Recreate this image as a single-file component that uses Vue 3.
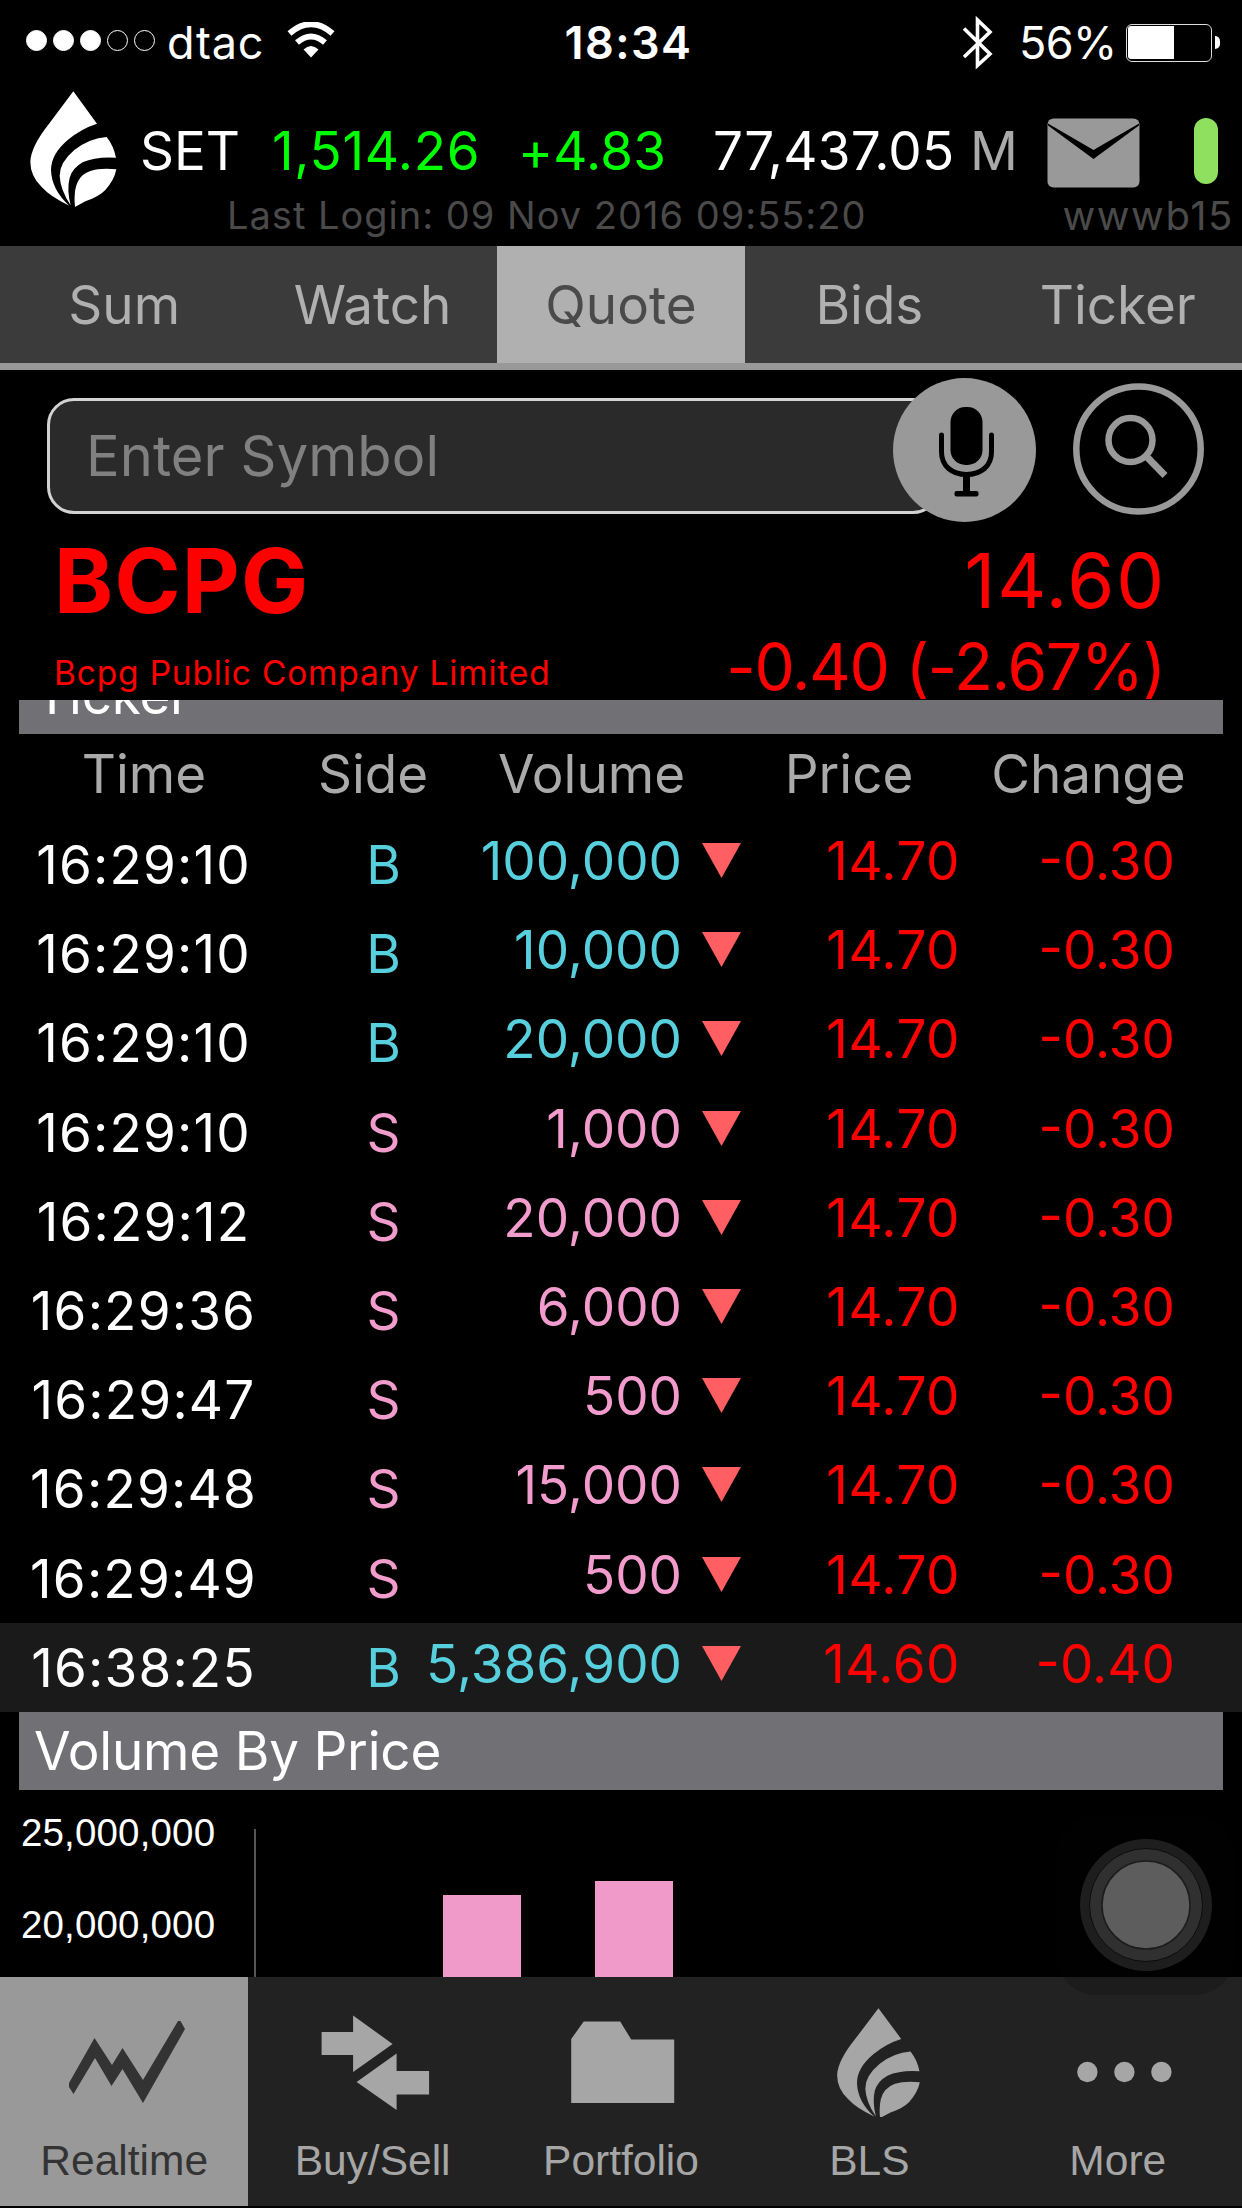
<script setup>
const signal = [true, true, true, false, false]
const tabs = ['Sum', 'Watch', 'Quote', 'Bids', 'Ticker']
const activeTab = 'Quote'

const trades = [
  { time: '16:29:10', side: 'B', volume: '100,000', price: '14.70', change: '-0.30' },
  { time: '16:29:10', side: 'B', volume: '10,000', price: '14.70', change: '-0.30' },
  { time: '16:29:10', side: 'B', volume: '20,000', price: '14.70', change: '-0.30' },
  { time: '16:29:10', side: 'S', volume: '1,000', price: '14.70', change: '-0.30' },
  { time: '16:29:12', side: 'S', volume: '20,000', price: '14.70', change: '-0.30' },
  { time: '16:29:36', side: 'S', volume: '6,000', price: '14.70', change: '-0.30' },
  { time: '16:29:47', side: 'S', volume: '500', price: '14.70', change: '-0.30' },
  { time: '16:29:48', side: 'S', volume: '15,000', price: '14.70', change: '-0.30' },
  { time: '16:29:49', side: 'S', volume: '500', price: '14.70', change: '-0.30' },
  { time: '16:38:25', side: 'B', volume: '5,386,900', price: '14.60', change: '-0.40' },
]

const axisLabels = ['25,000,000', '20,000,000']
const bars = [81.5, 95.5]

const flame = [
  'M222 34L293 131Q246 146 206 179Q155 222 155 270Q157 330 210 377Q153 350 127 321Q93 288 93 245Q95 200 148 133Z',
  'M322 171Q270 175 225 210Q180 248 181 288Q183 330 214 376Q202 328 211 293Q220 264 250 247Q290 229 350 233Q343 198 322 171Z',
  'M227 381Q221 320 243 293Q270 260 351 268Q345 300 318 330Q299 350 258 364Z',
]

const navItems = [
  { label: 'Realtime', icon: 'chart', active: true },
  { label: 'Buy/Sell', icon: 'swap' },
  { label: 'Portfolio', icon: 'folder' },
  { label: 'BLS', icon: 'flame' },
  { label: 'More', icon: 'more' },
]
</script>

<template>
  <div class="screen">
    <div class="status">
      <div class="status-left">
        <div class="signal">
          <i v-for="(on, i) in signal" :key="i" :class="{ on }"></i>
        </div>
        <span class="carrier">dtac</span>
        <svg class="wifi" width="48" height="36" viewBox="0 0 48 36">
          <path d="M2.500 11.500Q24-7 45.500 11.500" fill="none" stroke="#fff" stroke-width="6" />
          <path d="M10 20.500Q24 8.500 38 20.500" fill="none" stroke="#fff" stroke-width="6" />
          <path d="M16.500 27.500Q24 20.500 31.500 27.500L24 35.500Z" fill="#fff" />
        </svg>
      </div>
      <span class="clock">18:34</span>
      <div class="status-right">
        <svg width="30" height="54" viewBox="0 0 30 54">
          <path d="M1 12.500L27 38L14.500 49.500V4L27 16L1 41" fill="none" stroke="#fff" stroke-width="3.600" />
        </svg>
        <span class="percent">56%</span>
        <div class="battery"><div class="charge"></div></div>
        <i class="battery-tip"></i>
      </div>
    </div>

    <header class="header">
      <svg class="logo" width="87" height="117" viewBox="92 33 261 351">
        <path v-for="d in flame" :key="d" :d="d" fill="#fff" />
      </svg>
      <div class="market">
        <div class="market-row">
          <span class="set">SET</span>
          <span class="index up">1,514.26</span>
          <span class="diff up">+4.83</span>
          <span class="value">77,437.05</span>
          <span class="unit">M</span>
          <svg class="mail" width="93" height="70" viewBox="0 0 93 70">
            <rect x="0.500" y="0.500" width="92" height="69" rx="6" fill="#999" />
            <path d="M1 5.500L46.500 32L92 5.500V7.500L46.500 41L1 7.500Z" fill="#000" />
          </svg>
          <i class="online"></i>
        </div>
        <div class="login-row">
          <span class="login">Last Login: 09 Nov 2016 09:55:20</span>
          <span class="server">wwwb15</span>
        </div>
      </div>
    </header>

    <nav class="tabs">
      <div v-for="t in tabs" :key="t" class="tab" :class="{ active: t === activeTab }">{{ t }}</div>
    </nav>

    <div class="search">
      <div class="field">
        <span>Enter Symbol</span>
        <svg class="mic" width="143" height="144" viewBox="0 0 143 144">
          <ellipse cx="71.500" cy="72" rx="71.500" ry="72" fill="#999" />
          <rect x="57.500" y="29" width="32" height="58" rx="15" />
          <path d="M48.500 57V74C48.500 88 59 96.500 73.500 96.500S98.500 88 98.500 74V57" fill="none" stroke="#000" stroke-width="5" stroke-linecap="round" />
          <path d="M73.500 97V115" stroke="#000" stroke-width="7" />
          <rect x="61.500" y="113" width="24" height="5.500" rx="2" />
        </svg>
      </div>
      <svg class="find" width="131" height="132" viewBox="0 0 131 132" fill="none" stroke="#999">
        <ellipse cx="65.500" cy="66" rx="62.200" ry="62.500" stroke-width="6.500" />
        <circle cx="57.500" cy="57" r="22" stroke-width="6.500" />
        <path d="M73 73L92 92.500" stroke-width="7" />
      </svg>
    </div>

    <section class="quote">
      <div>
        <div class="symbol">BCPG</div>
        <div class="company">Bcpg Public Company Limited</div>
      </div>
      <div class="quote-right">
        <div class="last">14.60</div>
        <div class="delta">-0.40 (-2.67%)</div>
      </div>
    </section>

    <main class="content">
      <h2 class="bar-title clipped">Ticker</h2>
      <div class="columns">
        <span>Time</span><span>Side</span><span>Volume</span><span>Price</span><span>Change</span>
      </div>
      <div v-for="(t, i) in trades" :key="i" class="trade" :class="[t.side === 'B' ? 'buy' : 'sell', { latest: i === trades.length - 1 }]">
        <span class="time">{{ t.time }}</span>
        <span class="side">{{ t.side }}</span>
        <span class="volume">{{ t.volume }}</span>
        <svg class="arrow" width="39" height="35" viewBox="0 0 39 35"><path d="M0 0H39L19.500 35Z" fill="#ff5e62" /></svg>
        <span class="num">{{ t.price }}</span>
        <span class="num">{{ t.change }}</span>
      </div>
      <h2 class="bar-title">Volume By Price</h2>
      <div class="chart">
        <div class="axis-labels">
          <div v-for="a in axisLabels" :key="a">{{ a }}</div>
        </div>
        <div class="plot">
          <div v-for="(h, i) in bars" :key="i" class="bar" :style="{ height: h + 'px' }"></div>
        </div>
      </div>
    </main>

    <footer class="nav">
      <div v-for="n in navItems" :key="n.label" class="nav-item" :class="{ active: n.active }">
        <svg v-if="n.icon === 'chart'" width="248" height="140" viewBox="0 1977 248 140">
          <path d="M69 2083L94.500 2038L112 2065L122.500 2048L143 2080L178 2021H180.500L185 2029L143 2103L122.500 2069L111.500 2086L95 2058L73.500 2094L69 2087Z" fill="#333" />
        </svg>
        <svg v-else-if="n.icon === 'swap'" width="248" height="140" viewBox="248.400 1977 248 140">
          <path d="M321 2032H352.500V2015.500L392 2044L352.500 2072V2055H321ZM428.500 2071H396V2053.500L356 2082L396 2110V2094.500H428.500Z" fill="#a6a6a6" />
        </svg>
        <svg v-else-if="n.icon === 'folder'" width="248" height="140" viewBox="496.800 1977 248 140">
          <path d="M571 2039L583.500 2021.500H620L631 2039.500H674V2103H571Z" fill="#a6a6a6" />
        </svg>
        <svg v-else-if="n.icon === 'flame'" width="248" height="140" viewBox="745.200 1977 248 140">
          <g transform="translate(807.500 1997.500) scale(.3205 .3165)">
            <path v-for="d in flame" :key="d" :d="d" fill="#a6a6a6" />
          </g>
        </svg>
        <svg v-else width="248" height="140" viewBox="993.600 1977 248 140" fill="#a6a6a6">
          <circle cx="1087" cy="2072" r="10.200" /><circle cx="1124" cy="2072" r="10.200" /><circle cx="1161" cy="2072" r="10.200" />
        </svg>
        <span>{{ n.label }}</span>
      </div>
    </footer>

    <div class="assist">
      <svg width="132" height="132" viewBox="0 0 132 132">
        <circle cx="66" cy="66" r="66" fill="#1e1e1e" />
        <circle cx="66" cy="66" r="56.500" fill="#303030" stroke="#0c0c0c" />
        <circle cx="66" cy="66" r="44" fill="#5d5d5d" stroke="#1c1c1c" stroke-width="1.500" />
      </svg>
    </div>
  </div>
</template>

<style>
body {
  margin: 0;
  background: #000;
}
</style>

<style scoped>
.screen {
  position: relative;
  display: flex;
  flex-direction: column;
  width: 1242px;
  height: 2208px;
  overflow: hidden;
  background: #000;
  color: #fff;
  font-family: Inter, "Liberation Sans", sans-serif;
  font-size: 53px;
  white-space: nowrap;
}
svg {
  display: block;
  flex: none;
}
.status {
  display: grid;
  grid-template-columns: 1fr auto 1fr;
  height: 85px;
  font-size: 45px;
  line-height: 85px;
}
.status-left,
.status-right {
  display: flex;
  align-items: center;
}
.signal {
  display: flex;
  gap: 6px;
  margin: -4px 0 0 26px;
}
.signal i {
  box-sizing: border-box;
  width: 21px;
  height: 21px;
  border: 1.5px solid #fff;
  border-radius: 50%;
}
.signal i.on {
  background: #fff;
}
.carrier {
  width: 105px;
  margin-left: 12px;
  letter-spacing: 0.8px;
}
.wifi {
  margin: -6px 0 0 15px;
}
.clock {
  margin-left: 15px;
  font-weight: 600;
  letter-spacing: 1.4px;
}
.status-right {
  justify-content: flex-end;
  padding-right: 22px;
}
.percent {
  width: 92px;
  margin: 0 15px 0 26px;
  letter-spacing: -0.6px;
}
.battery {
  box-sizing: border-box;
  width: 86px;
  height: 38px;
  padding: 1px;
  border: 1.5px solid #ddd;
  border-radius: 6px;
}
.charge {
  width: 46px;
  height: 33px;
  border-radius: 3px 0 0 3px;
  background: #fff;
}
.battery-tip {
  width: 5px;
  height: 13px;
  margin-left: 3px;
  border-radius: 0 6px 6px 0;
  background: #fff;
}
.header {
  display: flex;
  height: 161px;
}
.logo {
  margin: 6px 0 0 30px;
}
.market {
  flex: 1;
}
.market-row {
  display: flex;
  height: 66px;
  margin-top: 33px;
  line-height: 66px;
}
.set {
  width: 132px;
  margin-left: 23px;
}
.index {
  width: 246px;
  letter-spacing: 0.7px;
}
.diff {
  width: 195px;
  letter-spacing: 0.2px;
}
.value {
  width: 257px;
  letter-spacing: 0.2px;
}
.unit {
  width: 76.5px;
  color: #aaa;
}
.up {
  color: #0f0;
}
.online {
  width: 24px;
  height: 66px;
  margin-left: 54px;
  border-radius: 12px;
  background: #8fe05f;
}
.login-row {
  display: flex;
  justify-content: space-between;
  height: 63px;
  padding: 0 8px 0 110px;
  line-height: 63px;
  color: #4a4a4a;
}
.login {
  font-size: 38px;
  letter-spacing: 1px;
}
.server {
  font-size: 40px;
  letter-spacing: 1.6px;
}
.tabs {
  display: grid;
  grid-template-columns: repeat(5, 1fr);
  height: 117px;
  border-bottom: 7px solid #999;
  background: #3b3b3b;
  line-height: 119px;
  text-align: center;
  color: #b0b0b0;
}
.tab {
  height: 117px;
}
.tab.active {
  background: #b0b0b0;
  color: #4a4a4a;
}
.search {
  display: flex;
  height: 160px;
}
.field {
  position: relative;
  box-sizing: border-box;
  width: 893px;
  height: 116px;
  margin: 28px 0 0 47px;
  padding-left: 36px;
  border: 3px solid #d2d2d2;
  border-radius: 27px;
  background: #2a2a2a;
  color: #808080;
  font-size: 56px;
  line-height: 111px;
  letter-spacing: 0.1px;
}
.mic {
  position: absolute;
  top: -23px;
  left: 843px;
}
.find {
  margin: 13px 0 0 133px;
}
.quote {
  display: flex;
  justify-content: space-between;
  height: 170px;
  padding: 0 77px 0 54px;
  color: #f00;
}
.symbol {
  font-size: 89.5px;
  font-weight: 700;
  line-height: 102px;
  letter-spacing: 1.2px;
}
.company {
  font-size: 33.5px;
  line-height: 82px;
  letter-spacing: 0.82px;
}
.quote-right {
  text-align: right;
}
.last {
  margin-right: -1px;
  font-size: 76px;
  line-height: 100px;
  letter-spacing: 1.8px;
}
.delta {
  font-size: 64px;
  line-height: 74px;
  letter-spacing: -1.15px;
}
.content {
  height: 1277px;
  overflow: hidden;
}
.bar-title {
  height: 78px;
  margin: 0 19px;
  padding-left: 15px;
  background: #717075;
  font-size: 53px;
  font-weight: 400;
  line-height: 79px;
  letter-spacing: -0.2px;
}
.bar-title.clipped {
  margin-top: -44px;
}
.bar-title.clipped {
  padding-left: 26px;
  text-indent: -10px;
}
.columns {
  display: grid;
  grid-template-columns: 288px 170px 267px 248px 231px;
  height: 86px;
  line-height: 81px;
  text-align: center;
  color: #aaa;
}
.trade {
  display: grid;
  grid-template-columns: 345px 77px 260px 59px 219px 215px;
  height: 89.2px;
  line-height: 90px;
}
.trade.latest {
  background: #1a1a1a;
}
.time {
  padding-right: 58px;
  text-align: center;
  letter-spacing: 1.2px;
}
.side {
  text-align: center;
}
.volume,
.num {
  line-height: 82px;
  text-align: right;
}
.num {
  color: #f00;
  letter-spacing: 0.5px;
}
.num:last-child {
  letter-spacing: 0;
}
.buy .side,
.buy .volume {
  color: #57cfdc;
}
.sell .side,
.sell .volume {
  color: #f29bcd;
}
.arrow {
  margin: 23px 0 0 20px;
}
.chart {
  display: flex;
  height: 187px;
}
.axis-labels {
  width: 233px;
  margin-top: -3px;
  padding-left: 21px;
  font-family: "Liberation Sans", Arial, sans-serif;
  font-size: 38.5px;
  line-height: 92px;
  letter-spacing: 0.15px;
}
.plot {
  display: flex;
  align-items: flex-end;
  gap: 74px;
  height: 148px;
  margin-top: 39px;
  padding-left: 187px;
  border-left: 2px solid #555;
}
.bar {
  width: 78px;
  background: #f09aca;
}
.nav {
  display: grid;
  grid-template-columns: repeat(5, 1fr);
  height: 229px;
  background: #222;
  color: #a6a6a6;
  font-family: "Liberation Sans", Arial, sans-serif;
  font-size: 42.5px;
}
.nav-item {
  display: flex;
  flex-direction: column;
  align-items: center;
  line-height: 88px;
}
.nav-item.active {
  background: #999;
  color: #333;
}
.assist {
  position: absolute;
  top: 1815px;
  left: 1056px;
  display: flex;
  align-items: center;
  justify-content: center;
  width: 179px;
  height: 180px;
  border-radius: 40px;
  background: rgba(4, 4, 4, 0.2);
}
</style>
